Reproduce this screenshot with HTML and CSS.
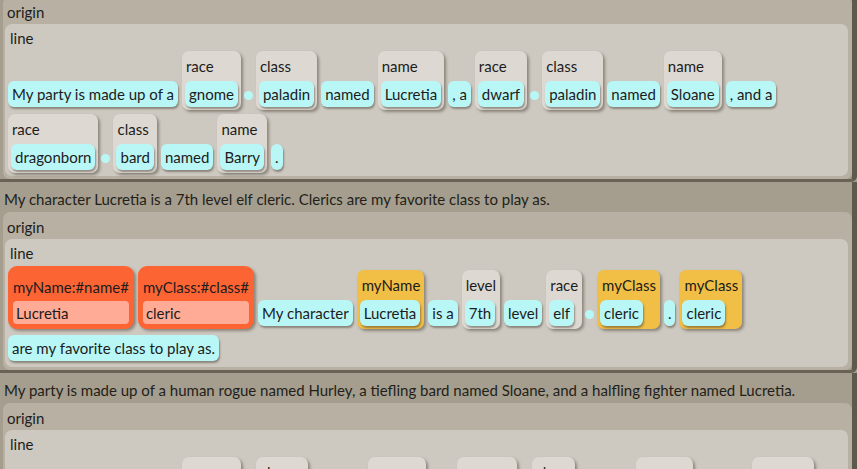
FILE: index.html
```html
<!DOCTYPE html>
<html>
<head>
<meta charset="utf-8">
<link rel="stylesheet" href="styles.css">
</head>
<body>
<div class="list">
  <div class="entry first">
    <div class="origin">
      <div class="olabel">origin</div>
      <div class="line">
        <div class="llabel">line</div>
        <div class="items">
          <span class="chip">My party is made up of a</span>
          <span class="grp"><span class="glabel">race</span><span class="chip in">gnome</span></span>
          <span class="dot"></span>
          <span class="grp"><span class="glabel">class</span><span class="chip in">paladin</span></span>
          <span class="chip">named</span>
          <span class="grp"><span class="glabel">name</span><span class="chip in">Lucretia</span></span>
          <span class="chip">, a</span>
          <span class="grp"><span class="glabel">race</span><span class="chip in">dwarf</span></span>
          <span class="dot"></span>
          <span class="grp"><span class="glabel">class</span><span class="chip in">paladin</span></span>
          <span class="chip">named</span>
          <span class="grp"><span class="glabel">name</span><span class="chip in">Sloane</span></span>
          <span class="chip">, and a</span>
          <span class="grp"><span class="glabel">race</span><span class="chip in">dragonborn</span></span>
          <span class="dot"></span>
          <span class="grp"><span class="glabel">class</span><span class="chip in">bard</span></span>
          <span class="chip">named</span>
          <span class="grp"><span class="glabel">name</span><span class="chip in">Barry</span></span>
          <span class="chip">.</span>
        </div>
      </div>
    </div>
  </div>

  <div class="entry">
    <div class="sentence">My character Lucretia is a 7th level elf cleric. Clerics are my favorite class to play as.</div>
    <div class="origin">
      <div class="olabel">origin</div>
      <div class="line">
        <div class="llabel">line</div>
        <div class="items">
          <span class="grp orange"><span class="glabel">myName:#name#</span><span class="chip salmon">Lucretia</span></span>
          <span class="grp orange"><span class="glabel">myClass:#class#</span><span class="chip salmon">cleric</span></span>
          <span class="chip">My character</span>
          <span class="grp yellow"><span class="glabel">myName</span><span class="chip in">Lucretia</span></span>
          <span class="chip">is a</span>
          <span class="grp"><span class="glabel">level</span><span class="chip in">7th</span></span>
          <span class="chip">level</span>
          <span class="grp"><span class="glabel">race</span><span class="chip in">elf</span></span>
          <span class="dot"></span>
          <span class="grp yellow"><span class="glabel">myClass</span><span class="chip in">cleric</span></span>
          <span class="chip">.</span>
          <span class="grp yellow"><span class="glabel">myClass</span><span class="chip in">cleric</span></span>
          <span class="chip">are my favorite class to play as.</span>
        </div>
      </div>
    </div>
  </div>

  <div class="entry">
    <div class="sentence">My party is made up of a human rogue named Hurley, a tiefling bard named Sloane, and a halfling fighter named Lucretia.</div>
    <div class="origin">
      <div class="olabel">origin</div>
      <div class="line">
        <div class="llabel">line</div>
        <div class="items">
          <span class="chip">My party is made up of a</span>
          <span class="grp"><span class="glabel">race</span><span class="chip in">human</span></span>
          <span class="dot"></span>
          <span class="grp"><span class="glabel">class</span><span class="chip in">rogue</span></span>
          <span class="chip">named</span>
          <span class="grp"><span class="glabel">name</span><span class="chip in">Hurley</span></span>
          <span class="chip">, a</span>
          <span class="grp"><span class="glabel">race</span><span class="chip in">tiefling</span></span>
          <span class="dot"></span>
          <span class="grp"><span class="glabel">class</span><span class="chip in">bard</span></span>
          <span class="chip">named</span>
          <span class="grp"><span class="glabel">name</span><span class="chip in">Sloane</span></span>
          <span class="chip">, and a</span>
          <span class="grp"><span class="glabel">race</span><span class="chip in">halfling</span></span>
          <span class="dot"></span>
          <span class="grp"><span class="glabel">class</span><span class="chip in">fighter</span></span>
          <span class="chip">named</span>
          <span class="grp"><span class="glabel">name</span><span class="chip in">Lucretia</span></span>
          <span class="chip">.</span>
        </div>
      </div>
    </div>
  </div>
</div>
</body>
</html>
```

FILE: styles.css
```css
html, body {
  margin: 0;
  padding: 0;
  height: 100%;
  overflow: hidden;
}
body {
  background: #a59d8d;
  font-family: Lato, "Open Sans", sans-serif;
  font-size: 15px;
  line-height: 20px;
  color: #1c1c1c;
}
.list {
  margin-top: -3px;
}
.entry {
  background: #a59d8d;
  padding: 0 0 0 3px;
  border-right: 5px solid #5f584c;
  border-bottom: 3px solid #6a6255;
  border-bottom-right-radius: 6px;
}
.sentence {
  padding: 7px 0 3px 1px;
  white-space: nowrap;
  color: #221f1a;
}
.origin {
  background: #b8b1a3;
  border-radius: 7px;
  padding: 0 4px 3px 2px;
}
.olabel {
  padding: 5px 2px 2px;
}
.line {
  background: #cdc9c0;
  border-radius: 7px;
  padding: 0 3px 3px 3px;
}
.llabel {
  padding: 4px 2px 3px;
}
.items {
  display: flex;
  flex-wrap: wrap;
  align-items: flex-end;
  gap: 4px 4px;
}
.chip {
  display: block;
  background: #b9f7f7;
  border-radius: 6px;
  padding: 3px 4px;
  white-space: pre;
  box-shadow: 1px 2px 2px rgba(60, 50, 40, 0.45);
  margin-top: 2px;
  margin-bottom: 3px;
}
.grp {
  display: flex;
  flex-direction: column;
  align-items: flex-start;
  background: #ddd9d2;
  border-radius: 7px;
  padding: 3px;
  box-shadow: 2px 2px 3px rgba(60, 50, 40, 0.45);
}
.glabel {
  display: block;
  padding: 2px 1px 5px;
  white-space: nowrap;
}
.chip.in {
  margin-top: 0;
  margin-bottom: 0;
}
.yellow {
  background: #f1bf45;
}
.yellow .glabel {
  padding-left: 2px;
}
.orange {
  background: #fd6434;
  padding: 5px;
  border-radius: 9px;
  align-items: stretch;
}
.orange .glabel {
  padding: 6px 0 4px;
}
.chip.salmon {
  background: #ffab95;
  border-radius: 4px;
  padding: 1.5px 3px;
  margin-top: 0;
  margin-bottom: 0;
  box-shadow: none;
}
.dot {
  display: block;
  width: 9px;
  height: 9px;
  border-radius: 50%;
  background: #b9f7f7;
  margin: 0 -1px 10px -1px;
}
```
